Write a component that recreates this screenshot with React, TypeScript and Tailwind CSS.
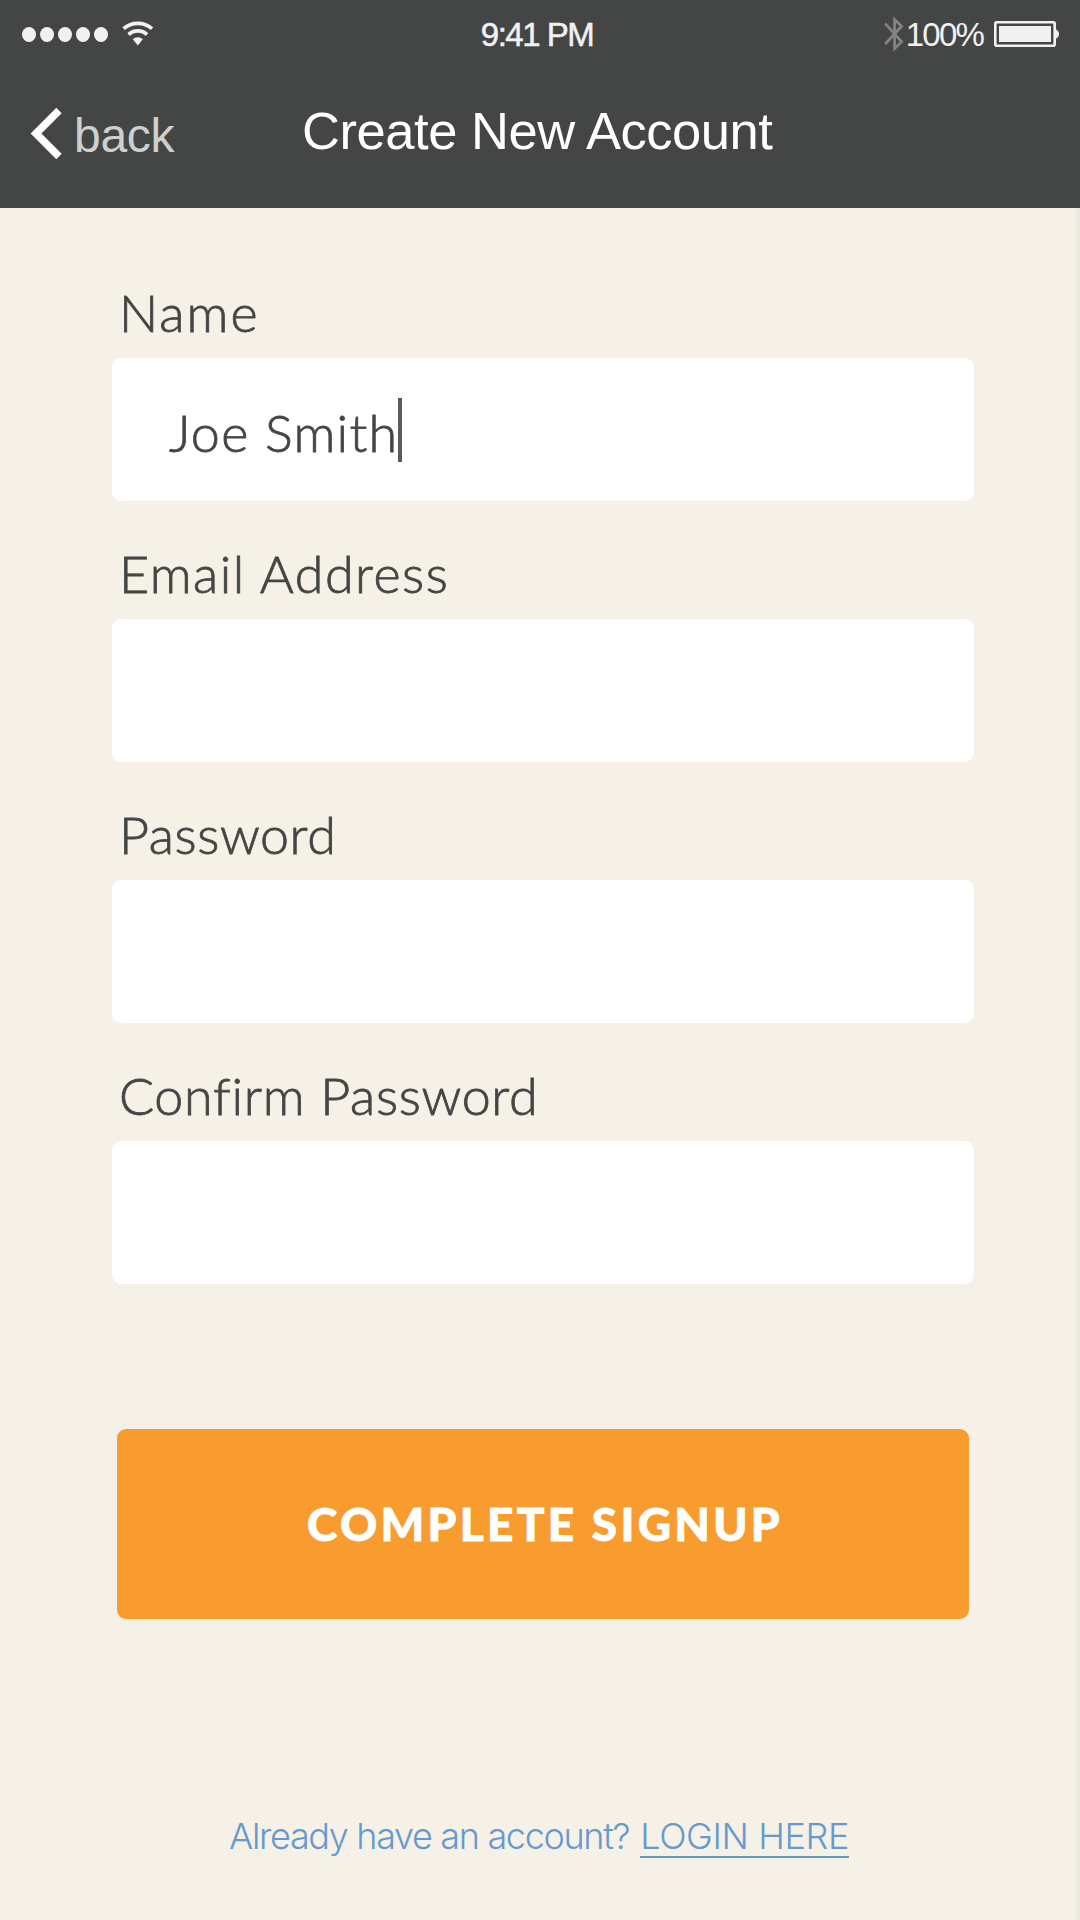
import type { ReactNode } from "react";

function WifiIcon() {
  return (
    <svg width="32" height="26" viewBox="0 0 32 26" fill="none" aria-hidden="true">
      <path d="M1.6 7.6C9.6 0.6 22 0.6 30 7.6" stroke="#f1f1f1" strokeWidth="3.7" />
      <path d="M6.6 13.6c5.2-4.9 13.2-4.9 18.4 0" stroke="#f1f1f1" strokeWidth="3.7" />
      <path d="M10.8 18.2c2.8-2.7 7.2-2.7 10 0l-5 6.4z" fill="#f1f1f1" />
    </svg>
  );
}

function BluetoothIcon() {
  return (
    <svg width="20" height="38" viewBox="0 0 20 38" fill="none" aria-hidden="true">
      <path
        d="M1.2 8.6 17.6 26.6 10.6 33.5V4.5L17.6 11.2 1.2 29"
        stroke="#838483"
        strokeWidth="2.7"
      />
    </svg>
  );
}

function BatteryIcon() {
  return (
    <svg width="66" height="26" viewBox="0 0 66 26" aria-hidden="true">
      <rect x="1.3" y="1.3" width="59.4" height="23.4" rx="1.5" fill="none" stroke="#f1f1f1" strokeWidth="2.6" />
      <rect x="5" y="5" width="52" height="16" fill="#f1f1f1" />
      <path d="M62 8.4c4 1.6 4 7.6 0 9.2z" fill="#f1f1f1" />
    </svg>
  );
}

function StatusBar() {
  return (
    <div className="grid h-[68px] grid-cols-3 items-center pl-[22px] pr-[20px] text-[33px] leading-none text-[#f1f1f1]">
      <div className="flex items-center">
        <div className="flex gap-[4px]">
          {[0, 1, 2, 3, 4].map((dot) => (
            <span key={dot} className="h-[15px] w-[14.1px] rounded-[50%] bg-[#f1f1f1]" />
          ))}
        </div>
        <div className="ml-[14px]">
          <WifiIcon />
        </div>
      </div>
      <span className="whitespace-nowrap pr-[8px] text-center tracking-[-1.5px] [-webkit-text-stroke:0.5px_#f1f1f1]">
        9:41 PM
      </span>
      <div className="flex items-center justify-end">
        <BluetoothIcon />
        <span className="ml-[2px] tracking-[-1.8px]">100%</span>
        <div className="ml-[11px]">
          <BatteryIcon />
        </div>
      </div>
    </div>
  );
}

function Header() {
  return (
    <header className="h-[208px] bg-[#444645]">
      <StatusBar />
      <div className="grid grid-cols-[302px_474px_1fr] items-start pt-[32px]">
        <a href="#" className="flex items-center pl-[30px] text-[#cfcfcf]">
          <svg width="34" height="66" viewBox="0 0 34 66" fill="none" aria-hidden="true">
            <path d="M29 10.5 6 33.5 29 56.5" stroke="#fff" strokeWidth="7.6" />
          </svg>
          <span className="ml-[10px] mt-[5px] text-[48px] leading-none tracking-[-0.3px]">back</span>
        </a>
        <h1 className="whitespace-nowrap pt-px text-[52.5px] leading-[60px] tracking-[-0.45px] text-white">
          Create New Account
        </h1>
      </div>
    </header>
  );
}

type FieldProps = {
  label: string;
  labelClassName: string;
  children?: ReactNode;
};

function Field({ label, labelClassName, children }: FieldProps) {
  return (
    <div className="font-[Lato,sans-serif] text-[52px] font-light leading-none [-webkit-text-stroke:0.8px_#444645]">
      <div className={`flex h-[118px] items-end pb-[20px] pl-[7px] ${labelClassName}`}>{label}</div>
      <div className="flex h-[143px] items-center rounded-[9px] bg-white pl-[57px]">{children}</div>
    </div>
  );
}

export default function App() {
  return (
    <div className="flex h-[1920px] w-[1080px] flex-col overflow-hidden bg-[#f5f1e6] font-['Liberation_Sans',sans-serif] text-[#444645]">
      <Header />
      <main className="flex flex-1 flex-col bg-linear-to-l from-[#eee5d3] to-transparent to-[6px] pt-8">
        <form className="ml-[112px] w-[862px]">
          <Field label="Name" labelClassName="tracking-[2px]">
            <span className="pt-[5px] tracking-[1.3px]">Joe Smith</span>
            <span className="h-[64px] w-[4px] bg-[#5a5a5a]" />
          </Field>
          <Field label="Email Address" labelClassName="tracking-[1.5px]" />
          <Field label="Password" labelClassName="tracking-[0.6px]" />
          <Field label="Confirm Password" labelClassName="tracking-[0.7px]" />
          <button
            type="button"
            className="ml-[5px] mt-[145px] h-[190px] w-[852px] rounded-[9px] bg-[#f89c30] pb-[2px] pl-[4px] font-[Lato,sans-serif] text-[46px] font-black tracking-[3.3px] text-white [-webkit-text-stroke:0.8px_#fff]"
          >
            COMPLETE SIGNUP
          </button>
        </form>
        <p className="ml-[229px] mt-[198px] flex whitespace-nowrap font-[Inter,sans-serif] text-[36px] font-light leading-[39px] text-[#6699cf]">
          <span className="tracking-[-1.33px]">Already have an account?</span>
          <a href="#" className="ml-[11px] border-b-2 border-[#6699cf] tracking-[-0.4px]">
            LOGIN HERE
          </a>
        </p>
      </main>
    </div>
  );
}
